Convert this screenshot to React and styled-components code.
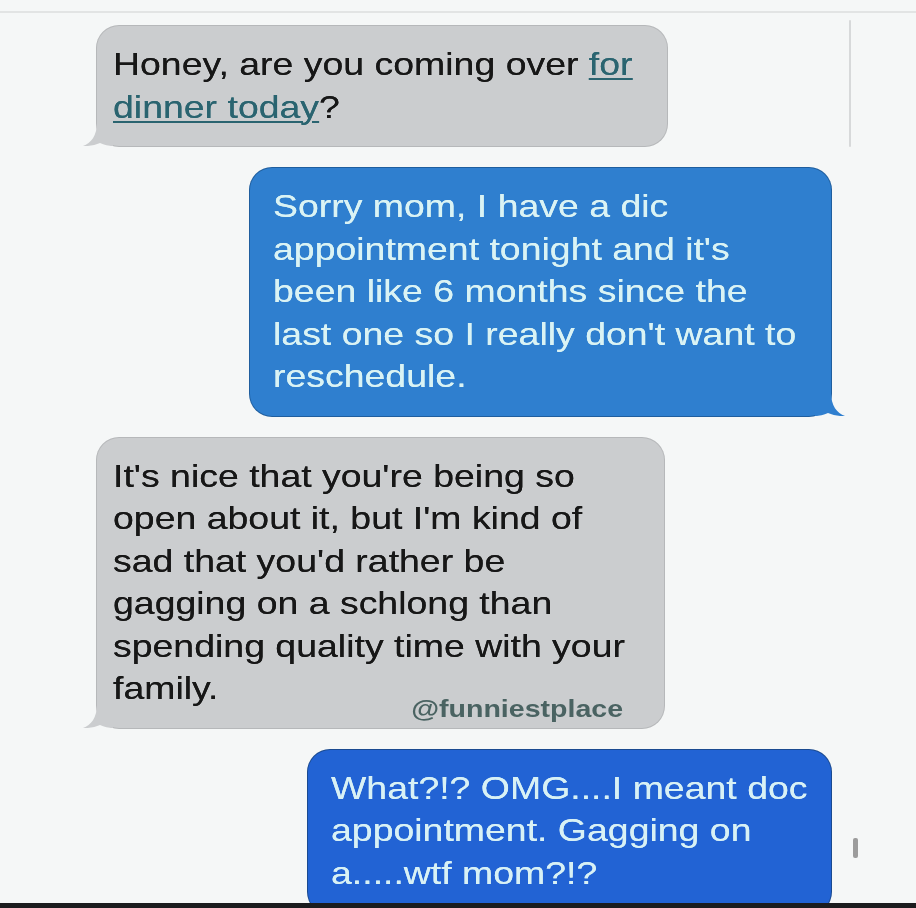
import styled, { createGlobalStyle } from "styled-components";

const GlobalStyle = createGlobalStyle`
  html, body {
    margin: 0;
    background: #f5f7f7;
  }
`;

const palette = {
  in: { bg: "#cbcdcf", edge: "#b6b8ba", text: "#171717" },
  out: { bg: "#2f7fcf", edge: "#1f5e9e", text: "#daf3f4" },
  deep: { bg: "#2263d4", edge: "#1a4a90", text: "#d8f1f5" },
};

const Tail = ({ color, side }) => (
  <TailSvg $side={side} viewBox="0 0 30 24" width="30" height="24">
    <path
      d="M0 0 L16 0 C16 14 22 21 30 24 C24 24.5 18 23 13 21 C9 23 4 24 0 24 Z"
      fill={color}
    />
  </TailSvg>
);

const App = () => {
  return (
    <Screen>
      <GlobalStyle />
      <TopRule />
      <Thread>
        <Bubble $tone="in" $w={570} $pb={18}>
          <Text>
            <Line>
              Honey, are you coming over <Link>for</Link>
            </Line>
            <Line>
              <Link>dinner today</Link>?
            </Line>
          </Text>
          <Tail color={palette.in.bg} side="left" />
        </Bubble>

        <Bubble $tone="out" $w={581} $pb={18}>
          <Text>
            <Line>Sorry mom, I have a dic</Line>
            <Line>appointment tonight and it's</Line>
            <Line>been like 6 months since the</Line>
            <Line>last one so I really don't want to</Line>
            <Line>reschedule.</Line>
          </Text>
          <Tail color={palette.out.bg} side="right" />
        </Bubble>

        <Bubble $tone="in" $w={567} $pb={18}>
          <Text>
            <Line>It's nice that you're being so</Line>
            <Line>open about it, but I'm kind of</Line>
            <Line>sad that you'd rather be</Line>
            <Line>gagging on a schlong than</Line>
            <Line>spending quality time with your</Line>
            <Line>family.</Line>
          </Text>
          <Watermark>@funniestplace</Watermark>
          <Tail color={palette.in.bg} side="left" />
        </Bubble>

        <Bubble $tone="deep" $w={523} $pb={20}>
          <Text>
            <Line>What?!? OMG....I meant doc</Line>
            <Line>appointment. Gagging on</Line>
            <Line>a.....wtf mom?!?</Line>
          </Text>
        </Bubble>
      </Thread>
      <BottomBar />
      <EdgeLine />
      <ScrollThumb />
    </Screen>
  );
};

const Screen = styled.div`
  position: relative;
  width: 916px;
  height: 908px;
  display: flex;
  flex-direction: column;
  background: #f5f7f7;
  overflow: hidden;
  font-family: "Liberation Sans", Arial, sans-serif;
`;

const TopRule = styled.div`
  flex-shrink: 0;
  height: 2px;
  margin-top: 11px;
  background: #e2e4e4;
`;

const Thread = styled.div`
  flex: 1;
  min-height: 0;
  overflow: hidden;
  display: flex;
  flex-direction: column;
  gap: 22px;
  padding-top: 13px;
`;

const Bubble = styled.div`
  position: relative;
  flex-shrink: 0;
  box-sizing: border-box;
  width: ${(p) => p.$w}px;
  align-self: ${(p) => (p.$tone === "in" ? "flex-start" : "flex-end")};
  margin-left: ${(p) => (p.$tone === "in" ? "97px" : "0")};
  margin-right: ${(p) => (p.$tone === "in" ? "0" : "85px")};
  padding: 17px 0 ${(p) => p.$pb}px ${(p) => (p.$tone === "in" ? "16px" : "23px")};
  border-radius: 22px;
  background: ${(p) => palette[p.$tone].bg};
  box-shadow: 0 0 0 1px ${(p) => palette[p.$tone].edge};
  color: ${(p) => palette[p.$tone].text};
`;

const Text = styled.div`
  font-size: 32px;
  line-height: 42.5px;
  white-space: nowrap;
  transform: scaleX(1.17);
  transform-origin: left top;
  text-shadow: 0 0 0.6px currentColor;
`;

const Line = styled.div``;

const Link = styled.span`
  color: #2a6470;
  text-decoration: underline;
  text-decoration-thickness: 2px;
  text-underline-offset: 3px;
`;

const Watermark = styled.div`
  position: absolute;
  right: 41px;
  bottom: 7px;
  font-size: 24px;
  font-weight: 700;
  line-height: 24px;
  color: #4a6362;
  transform: scaleX(1.19);
  transform-origin: right bottom;
`;

const TailSvg = styled.svg`
  position: absolute;
  bottom: 0;
  ${(p) => (p.$side === "right" ? "right: -14px;" : "left: -14px; transform: scaleX(-1);")}
`;

const BottomBar = styled.div`
  flex-shrink: 0;
  height: 5px;
  background: #1b1c1e;
`;

const EdgeLine = styled.div`
  position: absolute;
  left: 849px;
  top: 20px;
  width: 2px;
  height: 127px;
  border-radius: 1px;
  background: #d7d9da;
`;

const ScrollThumb = styled.div`
  position: absolute;
  left: 853px;
  top: 838px;
  width: 5px;
  height: 20px;
  border-radius: 2px;
  background: #9c9c9c;
`;

export default App;
